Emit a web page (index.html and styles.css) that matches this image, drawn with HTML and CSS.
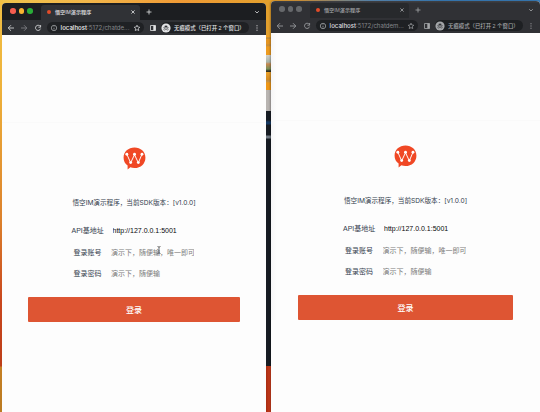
FILE: index.html
```html
<!DOCTYPE html>
<html lang="zh-CN">
<head>
<meta charset="utf-8">
<title>悟空IM演示程序</title>
<link rel="stylesheet" href="styles.css">
</head>
<body>
<div class="desktop">
  <div class="backdrop"></div>
  <div class="desktop-strip"><i class="folder"></i><i class="preview"></i><i class="folder short"></i><i class="grey"></i><i class="dark"></i><i class="red"></i></div>
</div>
<svg class="symbols" width="0" height="0" aria-hidden="true">
  <symbol id="back" viewBox="0 0 8 8"><path d="M7 4H1.4M4 1.2L1.2 4L4 6.8"/></symbol>
  <symbol id="forward" viewBox="0 0 8 8"><path d="M1 4h5.6M4 1.2L6.8 4L4 6.8"/></symbol>
  <symbol id="reload" viewBox="0 0 8 8"><path d="M6.2 2.3A2.6 2.6 0 1 0 6.6 4.6M6.6 1v2.2H4.4"/></symbol>
  <symbol id="info" viewBox="0 0 8 8"><circle cx="4" cy="4" r="2.7"/><path d="M4 3.7v1.8M4 2.3v.6"/></symbol>
  <symbol id="star" viewBox="0 0 8 8"><path d="M4 1.2l.85 1.8 1.95.25-1.4 1.35.35 1.95L4 5.6l-1.75.95.35-1.95-1.4-1.35L3.15 3z"/></symbol>
  <symbol id="panel" viewBox="0 0 8 8"><path d="M1.5 1.5h5v5h-5z"/><path class="solid" d="M4.3 1.5h2.2v5H4.3z"/></symbol>
  <symbol id="close" viewBox="0 0 8 8"><path d="M2.4 2.4l3.2 3.2M5.6 2.4L2.4 5.6"/></symbol>
  <symbol id="plus" viewBox="0 0 8 8"><path d="M4 1.5v5M1.5 4h5"/></symbol>
  <symbol id="chevron" viewBox="0 0 8 8"><path d="M2.2 3.2L4 5l1.8-1.8"/></symbol>
  <symbol id="more" viewBox="0 0 8 8"><path class="solid" d="M3.5 1.3h1v1h-1zM3.5 3.5h1v1h-1zM3.5 5.7h1v1h-1z"/></symbol>
  <symbol id="incognito" viewBox="0 0 10 10"><circle class="disc" cx="5" cy="5" r="4.6"/><path class="hat" d="M3.5 4L3.9 2.4L5 2.7L6.1 2.400L6.500 4zM2.3 4.1h5.400v.5H2.300z"/><path class="glasses" d="M4.500 6.300a.9 .8 0 1 1-1.800 0a.9 .8 0 1 1 1.800 0M7.300 6.300a.9 .8 0 1 1-1.800 0a.9 .8 0 1 1 1.800 0M4.500 6h1"/></symbol>
  <symbol id="logo" viewBox="0 0 24 24"><path class="bubble" d="M12 .6c6.4 0 11.4 4.4 11.4 10.6S18.500 22 12 22c-1.700 0-3-.3-4.300-.8L4.800 23.500V19.300C2.100 17.300.6 14.600.6 11.200C.6 5 5.600.6 12 .6z"/><path class="mark" d="M4 7.500l4 9L12 8l4 8.500 3.800-9"/><g class="nodes"><circle cx="4" cy="7.500" r="1.500"/><circle cx="8" cy="16.300" r="1.500"/><circle cx="12" cy="7.600" r="1.500"/><circle cx="16" cy="16.300" r="1.500"/><circle cx="19.800" cy="7.500" r="1.500"/></g></symbol>
</svg>

<section class="window front">
  <header class="tabbar">
    <div class="lights"><i class="r"></i><i class="y"></i><i class="g"></i></div>
    <div class="tab"><i class="favicon"></i><span class="tab-title">悟空IM演示程序</span><svg class="icon close"><use href="#close"/></svg></div>
    <svg class="icon plus"><use href="#plus"/></svg>
    <svg class="icon chevron"><use href="#chevron"/></svg>
  </header>
  <nav class="toolbar">
    <svg class="icon"><use href="#back"/></svg><svg class="icon dim"><use href="#forward"/></svg><svg class="icon"><use href="#reload"/></svg>
    <div class="address"><svg class="icon info"><use href="#info"/></svg><span class="url"><b>localhost</b>:5172/chatde...</span><svg class="icon star"><use href="#star"/></svg></div>
    <svg class="icon panel"><use href="#panel"/></svg>
    <div class="profile"><svg class="avatar"><use href="#incognito"/></svg><span>无痕模式（已打开 2 个窗口）</span></div>
    <svg class="icon more"><use href="#more"/></svg>
  </nav>
  <main class="page">
    <svg class="logo"><use href="#logo"/></svg>
    <p class="version">悟空IM演示程序，当前SDK版本：[v1.0.0]</p>
    <div class="form">
      <div class="row"><label>API基地址</label><span class="field">http://127.0.0.1:5001</span></div>
      <div class="row"><label>登录账号</label><span class="field hint">演示下，随便输，唯一即可</span></div>
      <div class="row"><label>登录密码</label><span class="field hint">演示下，随便输</span></div>
    </div>
    <button class="login">登录</button>
    <svg class="cursor" viewBox="0 0 4 8"><path d="M.5.500Q2 .5 2 1.500V6.500Q2 7.500.5 7.500M3.500.500Q2 .5 2 1.500M2 6.500Q2 7.500 3.500 7.500"/></svg>
  </main>
</section>

<section class="window rear">
  <header class="tabbar">
    <div class="lights"><i></i><i></i><i></i></div>
    <div class="tab"><i class="favicon"></i><span class="tab-title">悟空IM演示程序</span><svg class="icon close"><use href="#close"/></svg></div>
    <svg class="icon plus"><use href="#plus"/></svg>
    <svg class="icon chevron"><use href="#chevron"/></svg>
  </header>
  <nav class="toolbar">
    <svg class="icon"><use href="#back"/></svg><svg class="icon"><use href="#forward"/></svg><svg class="icon"><use href="#reload"/></svg>
    <div class="address"><svg class="icon info"><use href="#info"/></svg><span class="url"><b>localhost</b>:5172/chatdem...</span><svg class="icon star"><use href="#star"/></svg></div>
    <svg class="icon panel"><use href="#panel"/></svg>
    <div class="profile"><svg class="avatar"><use href="#incognito"/></svg><span>无痕模式（已打开 2 个窗口）</span></div>
    <svg class="icon more"><use href="#more"/></svg>
  </nav>
  <main class="page">
    <svg class="logo"><use href="#logo"/></svg>
    <p class="version">悟空IM演示程序，当前SDK版本：[v1.0.0]</p>
    <div class="form">
      <div class="row"><label>API基地址</label><span class="field">http://127.0.0.1:5001</span></div>
      <div class="row"><label>登录账号</label><span class="field hint">演示下，随便输，唯一即可</span></div>
      <div class="row"><label>登录密码</label><span class="field hint">演示下，随便输</span></div>
    </div>
    <button class="login">登录</button>
  </main>
</section>
</body>
</html>
```

FILE: styles.css
```css
* { box-sizing: border-box; }
body {
  margin: 0;
  width: 540px;
  height: 412px;
  position: relative;
  overflow: hidden;
  font-family: "Liberation Sans", "Noto Sans CJK SC", sans-serif;
}
.symbols { position: absolute; }
.desktop { position: absolute; inset: 0; background: #df9b2e; }
.backdrop {
  height: 412px;
  background:
    linear-gradient(90deg, transparent 270px, #d5963b 300px, #5a8ab4 370px, #397cb8 440px) 0 0 / 540px 4px no-repeat,
    linear-gradient(#f1c044 0, #eeb13a 90px, #dc812c 220px, #c9481e 300px, #bd3e19 366px, #c58024 367px, #bb7b22 412px) 0 0 / 3px 412px no-repeat,
    linear-gradient(90deg, #efc34c, #f2b64a 90px, #ef9a35 180px, #e3a02d 270px);
}
.desktop-strip {
  position: absolute;
  left: 266px;
  top: 0;
  width: 6px;
  height: 412px;
  display: flex;
  flex-direction: column;
}
.desktop-strip i { width: 6px; }
.folder { height: 55px; background: linear-gradient(#e3a02d 35px, #f2a01e 36px 37px, #a78140 38px, #e49522 39px 44px, #bf8c42 45px, #ed9b20 47px); }
.preview { height: 17px; background: linear-gradient(#d2d0ca, #a9b5aa 7px, #c9884f 9px, #78905a 14px, #343324 16px); }
.folder.short { height: 18px; background: linear-gradient(#eca12a, #d38b23 8px, #b89055 9px, #ee9717 11px); }
.grey { height: 21px; background: #b8b4b1; }
.dark { height: 255px; background: linear-gradient(#171c23 9px, #153963 11px 13px, #171c23 14px 24px, #727b84 25px 27px, #171c23 28px); }
.red { flex: 1; background: linear-gradient(90deg, #a62c12, #df4522); }

.window {
  position: absolute;
  height: 420px;
  border-radius: 4px 4px 0 0;
  overflow: hidden;
  background: #fdfdfd;
}
.front { left: 2px; top: 3px; width: 264px; --bar: #1c1e21; --tool: #303236; --tab: #303236; --pill: #1f2124; --ink: #e3e4e6; }
.rear { left: 271px; top: 1px; width: 269px; --bar: #303135; --tool: #303135; --tab: #27292c; --pill: #1e2023; --ink: #a5a7aa; }
.rear { box-shadow: -1px 0 2px #0004; }
.tabbar { height: 17px; display: flex; align-items: center; background: var(--bar); color: var(--ink); }
.rear .tabbar { background: linear-gradient(#3d3e42 1px, var(--bar) 2px); }
.lights { width: 39px; padding: 0 0 1px 8px; display: flex; gap: 3px; }
.lights i { width: 5.500px; height: 5.500px; border-radius: 50%; background: #66686b; }
.lights .r { background: #f55d4f; }
.lights .y { background: #f7b42f; }
.lights .g { background: #29ad38; }
.tab {
  width: 99px;
  height: 15px;
  align-self: flex-end;
  display: flex;
  align-items: center;
  padding: 0 3px 1px 6px;
  border-radius: 3px 3px 0 0;
  background: var(--tab);
}
.favicon { width: 4px; height: 4px; margin-right: 4px; border-radius: 50%; background: #e34c29; }
.tab-title { font-size: 5.100px; font-weight: 500; line-height: 8px; white-space: nowrap; }
.icon { width: 8px; height: 8px; flex: none; fill: none; stroke: currentColor; stroke-width: .8; }
.solid { fill: currentColor; stroke: none; }
.tab .close { margin-left: auto; }
.plus { margin-left: 5px; }
.chevron { margin-left: auto; margin-right: 5px; }
.toolbar {
  height: 15px;
  display: flex;
  align-items: center;
  padding: 0 5px;
  background: var(--tool);
  color: var(--ink);
}
.toolbar > .icon + .icon { margin-left: 5.300px; }
.dim { color: #85878a; }
.address {
  flex: 1;
  height: 11px;
  min-width: 0;
  margin-left: 5px;
  display: flex;
  align-items: center;
  padding: 0 3px 0 3px;
  border-radius: 6px;
  background: var(--pill);
}
.info { color: #a0a2a5; }
.url { margin-left: 3px; font: 6.100px/8px Inter, sans-serif; color: #85878b; white-space: nowrap; }
.url b { font-weight: 500; color: #f0f0f1; }
.rear .url b { color: #dedfe0; }
.star { margin-left: auto; stroke-width: .7; }
.toolbar .panel { margin: 0 4px 0 5px; }
.profile {
  width: 88px;
  height: 11px;
  display: flex;
  align-items: center;
  border-radius: 6px;
  background: var(--pill);
  font-size: 5.400px;
  font-weight: 500;
  line-height: 8px;
  white-space: nowrap;
}
.profile span { margin-left: 3px; }
.avatar { width: 10px; height: 10px; flex: none; }
.disc { fill: var(--ink); }
.hat { fill: #303236; }
.glasses { fill: none; stroke: #303236; stroke-width: .5; }
.toolbar .more { margin-left: 4px; }
.page { position: relative; display: flex; flex-direction: column; align-items: center; color: #34404d; }
.rear .page { background: linear-gradient(90deg, #f6f6f7, #fdfdfd 6px); }
.page::before { content: ""; width: 100%; height: 87px; margin-bottom: 24px; border-bottom: 1px solid #fafafa; }
.logo { width: 23px; height: 23px; }
.bubble { fill: #f04825; }
.mark { fill: none; stroke: #fff; stroke-width: 1; }
.nodes { fill: #fff; }
.version { margin: 27.500px 0 0; height: 10px; font: 6.600px/10px Inter, "Noto Sans CJK SC", sans-serif; white-space: nowrap; }
.form { width: 125px; margin-top: 13px; }
.row { height: 21.500px; display: flex; align-items: center; font-size: 7px; line-height: 10px; }
.row label { width: 32px; text-align: center; margin-right: 9px; white-space: nowrap; }
.field { width: 83px; overflow: hidden; white-space: nowrap; color: #080808; }
.hint { margin-left: -1.500px; color: #7c7c7c; }
.login {
  width: 80%;
  height: 25px;
  margin-top: 11.500px;
  padding: 0;
  border: 0;
  border-radius: 1px;
  background: #de5533;
  color: #fff;
  font: 500 8px/25px "Noto Sans CJK SC", sans-serif;
}
.cursor { position: absolute; left: 155px; top: 211px; width: 4px; height: 8px; fill: none; stroke: #333; stroke-width: .7; }
```
